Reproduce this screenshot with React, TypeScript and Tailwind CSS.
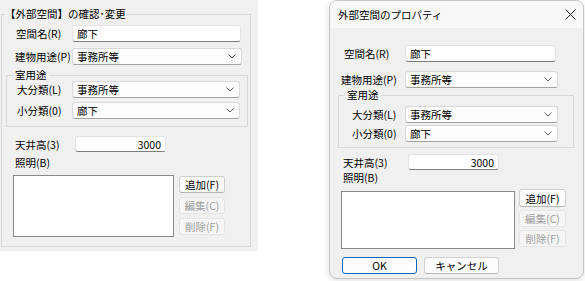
import React from "react";

const font = { fontFamily: '"Noto Sans CJK JP", "Noto Sans", sans-serif' };

const Chevron = () => (
  <svg width="8" height="5" viewBox="0 0 8 5" className="shrink-0">
    <path d="M0.5 0.5 L4 4 L7.5 0.5" fill="none" stroke="#606060" strokeWidth="1" />
  </svg>
);

type FieldProps = { value: string; className: string; right?: boolean };

const TextBox = ({ value, className, right }: FieldProps) => (
  <div
    className={`flex items-center bg-white border border-[#e3e3e3] border-b-[#7d7d7d] rounded-[3px] px-[4px] text-black ${
      right ? "justify-end" : ""
    } ${className}`}
  >
    {value}
  </div>
);

const Select = ({ value, className }: FieldProps) => (
  <div
    className={`flex items-center justify-between bg-[#fdfdfd] border border-[#d9d9d9] border-b-[#a3a3a3] rounded-[3px] pl-[4px] pr-[5px] text-black ${className}`}
  >
    <span>{value}</span>
    <Chevron />
  </div>
);

const Btn = ({ label, disabled, className }: { label: string; disabled?: boolean; className: string }) => (
  <div
    className={`flex items-center justify-center rounded-[3px] border ${
      disabled
        ? "bg-[#f5f5f5] border-[#e5e5e5] text-[#a0a0a0]"
        : "bg-[#fdfdfd] border-[#d0d0d0] border-b-[#b5b5b5] text-black"
    } ${className}`}
  >
    {label}
  </div>
);

function LeftPanel() {
  return (
    <div className="w-[258px] h-[251px] bg-[#f0f0f0] pl-px pt-[7px] shrink-0">
      <fieldset className="w-[250px] h-[240px] border border-[#d8d8d8]">
        <legend className="ml-[3px] leading-[14px]">【外部空間】の確認･変更</legend>
        <div className="flex items-center h-[17px] mt-[4px] pl-[14px]">
          <span className="w-[56px] shrink-0">空間名(R)</span>
          <TextBox value="廊下" className="w-[169px] h-[17px]" />
        </div>
        <div className="flex items-center h-[17px] mt-[6px] pl-[13px]">
          <span className="w-[57px] shrink-0">建物用途(P)</span>
          <Select value="事務所等" className="w-[170px] h-[17px]" />
        </div>
        <fieldset className="ml-[4px] mt-[4px] w-[242px] h-[58px] border border-[#d8d8d8]">
          <legend className="ml-[6px] px-[2px] leading-[12px]">室用途</legend>
          <div className="flex items-center h-[17px] pl-[10px]">
            <span className="w-[55px] shrink-0">大分類(L)</span>
            <Select value="事務所等" className="w-[168px] h-[17px]" />
          </div>
          <div className="flex items-center h-[17px] mt-[4px] pl-[10px]">
            <span className="w-[55px] shrink-0">小分類(0)</span>
            <Select value="廊下" className="w-[168px] h-[17px]" />
          </div>
        </fieldset>
        <div className="flex items-center h-[16px] mt-[9px] pl-[13px]">
          <span className="w-[60px] shrink-0">天井高(3)</span>
          <TextBox value="3000" right className="w-[91px] h-[16px]" />
        </div>
        <div className="h-[14px] leading-[14px] mt-[4px] pl-[13px]">照明(B)</div>
        <div className="flex items-start mt-[5px] pl-[11px] gap-[5px]">
          <div className="w-[161px] h-[62px] bg-white border border-[#8a8a8a]" />
          <div className="flex flex-col gap-[4px] mt-px">
            <Btn label="追加(F)" className="w-[46px] h-[17px]" />
            <Btn label="編集(C)" disabled className="w-[46px] h-[17px]" />
            <Btn label="削除(F)" disabled className="w-[46px] h-[17px]" />
          </div>
        </div>
      </fieldset>
    </div>
  );
}

function Dialog() {
  return (
    <div className="ml-[71px] w-[255px] h-[279px] border border-[#c4c4c4] rounded-[8px] bg-[#f0f0f0] overflow-hidden shadow-[0_2px_6px_rgba(0,0,0,0.12)] shrink-0">
      <div className="h-[27px] bg-[#f8f8f8] flex items-center justify-between pl-[8px] pr-[7px]">
        <span>外部空間のプロパティ</span>
        <svg width="11" height="11" viewBox="0 0 11 11">
          <path d="M0.5 0.5 L10.5 10.5 M10.5 0.5 L0.5 10.5" stroke="#1a1a1a" strokeWidth="1" />
        </svg>
      </div>
      <div className="flex items-center h-[17px] mt-[17px] pl-[14px]">
        <span className="w-[61px] shrink-0">空間名(R)</span>
        <TextBox value="廊下" className="w-[151px] h-[17px]" />
      </div>
      <div className="flex items-center h-[17px] mt-[9px] pl-[11px]">
        <span className="w-[64px] shrink-0">建物用途(P)</span>
        <Select value="事務所等" className="w-[153px] h-[17px]" />
      </div>
      <fieldset className="ml-[8px] mt-px w-[236px] h-[59px] border border-[#d8d8d8]">
        <legend className="ml-[6px] px-[2px] leading-[12px]">室用途</legend>
        <div className="flex items-center h-[17px] mt-[5px] pl-[13px]">
          <span className="w-[53px] shrink-0">大分類(L)</span>
          <Select value="事務所等" className="w-[153px] h-[17px]" />
        </div>
        <div className="flex items-center h-[17px] mt-[2px] pl-[13px]">
          <span className="w-[53px] shrink-0">小分類(0)</span>
          <Select value="廊下" className="w-[153px] h-[17px]" />
        </div>
      </fieldset>
      <div className="flex items-center h-[16px] mt-[6px] pl-[13px]">
        <span className="w-[65px] shrink-0">天井高(3)</span>
        <TextBox value="3000" right className="w-[91px] h-[16px]" />
      </div>
      <div className="h-[14px] leading-[14px] mt-px pl-[13px]">照明(B)</div>
      <div className="flex items-start mt-[4px] pl-[11px] gap-[4px]">
        <div className="w-[174px] h-[58px] mt-[2px] bg-white border border-[#8a8a8a]" />
        <div className="flex flex-col gap-[3px]">
          <Btn label="追加(F)" className="w-[47px] h-[18px]" />
          <Btn label="編集(C)" disabled className="w-[47px] h-[17px]" />
          <Btn label="削除(F)" disabled className="w-[47px] h-[17px]" />
        </div>
      </div>
      <div className="flex gap-[7px] mt-[8px] pl-[12px]">
        <div className="w-[75px] h-[17px] flex items-center justify-center rounded-[3px] border border-[#0067c0] bg-[#fdfdfd]">
          OK
        </div>
        <Btn label="キャンセル" className="w-[75px] h-[17px]" />
      </div>
    </div>
  );
}

export default function App() {
  return (
    <div className="w-[585px] h-[281px] bg-white flex items-start text-[10.5px] leading-[13px] text-black whitespace-nowrap overflow-hidden" style={font}>
      <LeftPanel />
      <Dialog />
    </div>
  );
}
